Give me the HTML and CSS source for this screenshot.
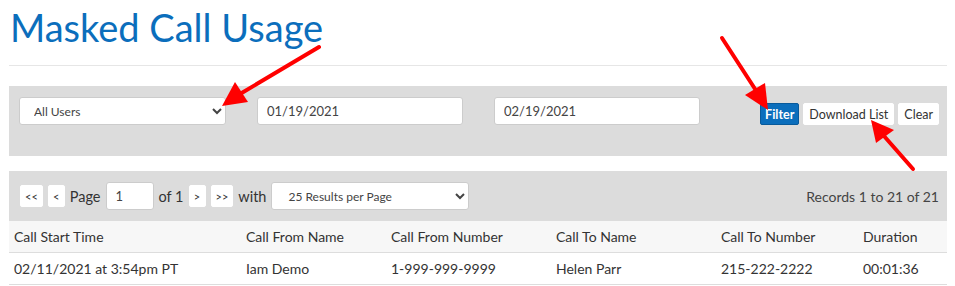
FILE: index.html
```html
<!DOCTYPE html>
<html>
<head>
    <title>Masked Call Usage</title>
    <link rel="stylesheet" href="styles.css">
</head>
<body>
    <div class="page">
        <h1 class="page-title">Masked Call Usage</h1>

        <div class="filter-panel">
            <select class="filter-select">
                <option>All Users</option>
            </select>
            <input type="text" class="date-input" value="01/19/2021">
            <input type="text" class="date-input" value="02/19/2021">
            <div class="filter-buttons">
                <button class="btn btn-primary">Filter</button>
                <button class="btn">Download List</button>
                <button class="btn">Clear</button>
            </div>
        </div>

        <div class="pager">
            <div class="pager-left">
                <button class="btn btn-small">&lt;&lt;</button>
                <button class="btn btn-small">&lt;</button>
                <span>Page</span>
                <input type="text" class="page-input" value="1">
                <span>of 1</span>
                <button class="btn btn-small">&gt;</button>
                <button class="btn btn-small">&gt;&gt;</button>
                <span>with</span>
                <select class="per-page">
                    <option>25 Results per Page</option>
                </select>
            </div>
            <div class="records">Records 1 to 21 of 21</div>
        </div>

        <table class="usage-table">
            <thead>
                <tr>
                    <th class="col-time">Call Start Time</th>
                    <th class="col-from-name">Call From Name</th>
                    <th class="col-from-num">Call From Number</th>
                    <th class="col-to-name">Call To Name</th>
                    <th class="col-to-num">Call To Number</th>
                    <th>Duration</th>
                </tr>
            </thead>
            <tbody>
                <tr>
                    <td>02/11/2021 at 3:54pm PT</td>
                    <td>Iam Demo</td>
                    <td>1-999-999-9999</td>
                    <td>Helen Parr</td>
                    <td>215-222-2222</td>
                    <td>00:01:36</td>
                </tr>
            </tbody>
        </table>
    </div>

    <!-- annotation arrows -->
    <svg class="arrows" width="955" height="286" viewBox="0 0 955 286">
        <g stroke="#f00" stroke-width="4" stroke-linecap="round" fill="none">
            <line x1="319" y1="47" x2="240" y2="94"/>
            <line x1="722" y1="38" x2="757" y2="92"/>
            <line x1="913" y1="169" x2="884" y2="136"/>
        </g>
        <g fill="#f00">
            <polygon points="222,106 248,102 235,82"/>
            <polygon points="768,110 745,95 765,83"/>
            <polygon points="871,120 894,130 876,143"/>
        </g>
    </svg>
</body>
</html>
```

FILE: styles.css
```css
body {
    margin: 0;
    font-family: Lato, "Open Sans", sans-serif;
    color: #333;
    background: #fff;
}
.page {
    padding: 0 8px 0 9px;
}
.page-title {
    margin: 0 0 20px;
    padding: 6px 0 17px 1px;
    font-size: 38px;
    font-weight: normal;
    color: #0b6ebc;
    line-height: 42px;
    border-bottom: 1px solid #e6e6e6;
}
.filter-panel {
    background: #dcdcdc;
    height: 70px;
    box-sizing: border-box;
    padding: 11px 10px;
    display: flex;
    align-items: flex-start;
}
.filter-select,
.date-input,
.per-page,
.page-input {
    height: 28px;
    box-sizing: border-box;
    border: 1px solid #ccc;
    border-radius: 3px;
    background: #fff;
    font-family: inherit;
    font-size: 12px;
    color: #444;
}
.filter-select {
    width: 207px;
    padding: 0 10px;
}
.date-input {
    width: 206px;
    margin-left: 31px;
    padding: 0 9px;
    font-size: 13px;
}
.filter-buttons {
    margin-left: auto;
    margin-top: 6px;
    margin-right: -2px;
    display: flex;
    gap: 4px;
}
.btn {
    height: 22px;
    padding: 0 5px;
    border: 1px solid #fff;
    border-radius: 2px;
    background: #fff;
    color: #333;
    font-family: inherit;
    font-size: 12.5px;
    cursor: pointer;
}
.btn-primary {
    background: #0b6ebc;
    border-color: #085a9b;
    color: #fff;
    font-weight: bold;
    padding: 0 4px;
}
.pager {
    margin-top: 15px;
    background: #dcdcdc;
    height: 50px;
    display: flex;
    align-items: center;
    justify-content: space-between;
    padding: 0 8px 0 10px;
}
.pager-left {
    display: flex;
    align-items: center;
    gap: 5px;
    font-size: 14.5px;
}
.btn-small {
    padding: 0 4px;
    font-size: 11px;
    min-width: 17px;
}
.btn-small:first-child {
    margin-left: 1px;
}
.page-input {
    width: 48px;
    padding: 0 9px;
    font-size: 13px;
}
.per-page {
    width: 198px;
    padding: 0 12px;
}
.records {
    font-size: 14px;
    color: #444;
}
.usage-table {
    width: 100%;
    border-collapse: collapse;
    font-size: 14px;
}
.usage-table th,
.usage-table td {
    text-align: left;
    font-weight: normal;
    height: 31px;
    padding: 0 5px;
    border-bottom: 1px solid #ddd;
}
.usage-table th {
    background: #f7f7f7;
}
.col-time { width: 222px; }
.col-from-name { width: 135px; }
.col-from-num { width: 155px; }
.col-to-name { width: 155px; }
.col-to-num { width: 132px; }
.arrows {
    position: absolute;
    left: 0;
    top: 0;
    pointer-events: none;
}
```
